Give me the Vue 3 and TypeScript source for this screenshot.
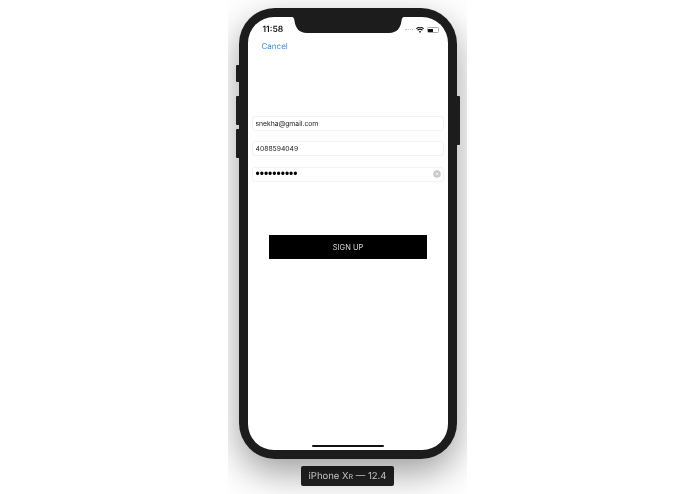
<script setup lang="ts">
const fields = [
  { type: 'email', value: 'snekha@gmail.com', clear: false },
  { type: 'tel', value: '4088594049', clear: false },
  { type: 'password', value: 'password12', clear: true },
]
</script>

<template>
  <div class="stage">
    <div class="clip">
      <div class="phone">
        <span class="hw mute"></span>
        <span class="hw vol-up"></span>
        <span class="hw vol-down"></span>
        <span class="hw power"></span>
        <div class="screen">
          <svg class="notch" viewBox="0 0 112 16" width="112" height="16">
            <path d="M0 0 H112 C110.500 0 110 1 109.500 4 C108.500 11 105 16 97 16 H15 C7 16 3.500 11 2.500 4 C2 1 1.500 0 0 0 Z" fill="#1c1c1c" />
          </svg>
          <div class="status">
            <span class="time">11:58</span>
            <div class="status-icons">
              <span class="signal"></span>
              <svg class="wifi" viewBox="0 0 16 12" width="8" height="6.500">
                <path d="M8 11.5 L5.6 8.7 A3.6 3.6 0 0 1 10.4 8.7 Z M3.9 6.9 L2.4 5.1 A8.4 8.4 0 0 1 13.6 5.1 L12.1 6.9 A6 6 0 0 0 3.9 6.9 Z M1.4 3.9 L0 2.3 A12.2 12.2 0 0 1 16 2.3 L14.6 3.9 A10 10 0 0 0 1.4 3.9 Z" fill="#111" />
              </svg>
              <span class="battery"><span class="level"></span></span>
            </div>
          </div>
          <a class="cancel">Cancel</a>
          <form class="form" @submit.prevent>
            <div v-for="f in fields" :key="f.value" class="field">
              <input :type="f.type" :value="f.value" readonly />
              <span v-if="f.clear" class="clear">
                <svg viewBox="0 0 8 8" width="8" height="8">
                  <circle cx="4" cy="4" r="3.8" fill="#c9c9c9" />
                  <path d="M2.7 2.7 L5.300 5.300 M5.300 2.700 L2.700 5.300" stroke="#fff" stroke-width="0.7" />
                </svg>
              </span>
            </div>
            <button class="submit" type="submit">SIGN UP</button>
          </form>
          <div class="home"></div>
        </div>
      </div>
      <div class="label">iPhone X<span class="small">R</span> — 12.4</div>
    </div>
  </div>
</template>

<style>
html, body { margin: 0; background: #fff; }
</style>

<style scoped>
.stage {
  width: 695px;
  height: 494px;
  background: #fff;
  overflow: hidden;
  font-family: Inter, "Liberation Sans", sans-serif;
  text-rendering: geometricPrecision;
  filter: blur(0.3px);
}
.clip {
  width: 239px;
  height: 494px;
  margin-left: 228px;
  padding-top: 8px;
  box-sizing: border-box;
  overflow: hidden;
  display: flex;
  flex-direction: column;
  align-items: center;
}
.phone {
  position: relative;
  width: 200px;
  height: 433px;
  flex: none;
  padding: 9px;
  background: #1c1c1c;
  border-radius: 36px;
  box-shadow: 0 14px 36px rgba(0, 0, 0, 0.38);
}
.hw { position: absolute; width: 3px; background: #1c1c1c; }
.mute { left: -3px; top: 57px; height: 17px; border-radius: 1px 0 0 1px; }
.vol-up { left: -3px; top: 88px; height: 29px; border-radius: 1px 0 0 1px; }
.vol-down { left: -3px; top: 121px; height: 29px; border-radius: 1px 0 0 1px; }
.power { right: -3px; top: 88px; height: 49px; border-radius: 0 1px 1px 0; }
.screen {
  position: relative;
  height: 100%;
  background: #fff;
  border-radius: 26px;
  overflow: hidden;
  display: flex;
  flex-direction: column;
}
.notch {
  position: absolute;
  left: 44px;
  top: 0;
  display: block;
}
.status {
  display: flex;
  justify-content: space-between;
  align-items: center;
  height: 26px;
  padding: 0 9px 0 15px;
  flex: none;
}
.time { font-size: 8.5px; font-weight: 600; color: #111; }
.status-icons { display: flex; align-items: center; gap: 3px; }
.signal { width: 8px; height: 1px; border-top: 1px dotted #c4c4c4; }
.wifi { display: block; }
.battery {
  width: 12px;
  height: 6px;
  border: 0.5px solid #aaa;
  border-radius: 1.5px;
  padding: 0.5px;
  box-sizing: border-box;
  display: flex;
}
.level { width: 60%; background: #111; border-radius: 0.5px; }
.cancel {
  margin: -2.500px 0 0 14px;
  font-size: 8px;
  line-height: 10px;
  color: #3a8ef0;
  flex: none;
}
.form {
  display: flex;
  flex-direction: column;
  padding: 65.500px 4px 0;
}
.field { position: relative; height: 15px; margin-bottom: 10px; }
.field:nth-child(3) { margin-top: 1px; }
.field input {
  display: block;
  width: 100%;
  height: 100%;
  box-sizing: border-box;
  padding: 0 3px;
  border: 1px solid #f3f3f3;
  border-radius: 3px;
  outline: none;
  background: #fff;
  color: #222;
  font-family: inherit;
  font-size: 6.8px;
}
.field input[type='password'] {
  padding-bottom: 1px;
  font-family: "Liberation Sans", sans-serif;
  font-size: 12px;
  color: #000;
}
.clear {
  position: absolute;
  right: 3px;
  top: 2.500px;
  display: flex;
}
.clear svg { display: block; }
.submit {
  align-self: center;
  width: 158px;
  height: 24px;
  margin-top: 43px;
  background: #000;
  border: 0;
  padding: 0 0 0 1px;
  color: #dcdcdc;
  font-family: inherit;
  font-size: 7.5px;
}
.home {
  position: absolute;
  left: 64px;
  bottom: 3px;
  width: 72px;
  height: 2px;
  background: #111;
  border-radius: 1px;
}
.label {
  flex: none;
  margin-top: 7px;
  width: 93px;
  height: 20px;
  background: #222;
  border-radius: 2px;
  color: #e4e4e4;
  font-size: 9.5px;
  line-height: 21px;
  text-align: center;
}
.small { font-size: 7px; }
</style>
